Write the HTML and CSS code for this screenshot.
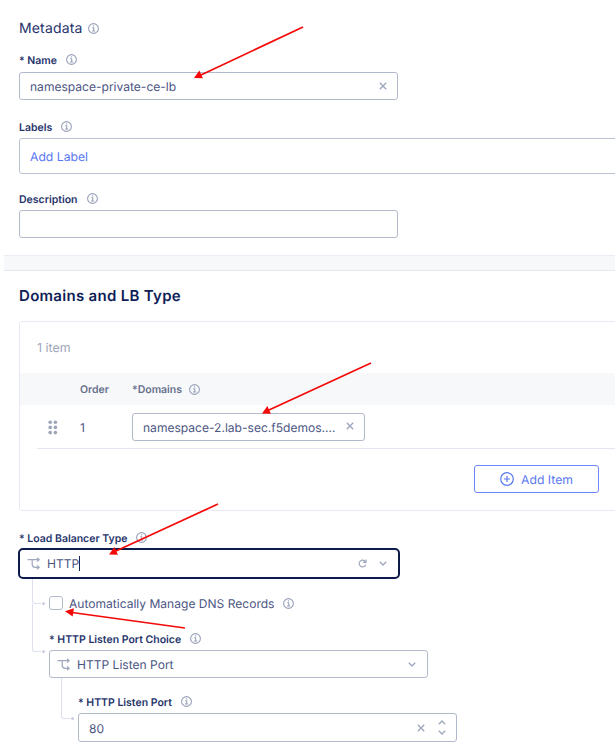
FILE: index.html
```html
<!DOCTYPE html>
<html lang="en">
<head>
<meta charset="utf-8">
<title>HTTP Load Balancer</title>
<link rel="stylesheet" href="styles.css">
</head>
<body>
<svg class="defs" width="0" height="0" aria-hidden="true">
  <symbol id="info" viewBox="0 0 11 11"><circle cx="5.5" cy="5.5" r="4.9"/><path d="M4.2 4.8h1.5v3M4 8h3.2"/><path d="M4.9 2.9h1.2"/></symbol>
  <symbol id="close" viewBox="0 0 8 8"><path d="M.8.8l6.4 6.4M7.2.8L.8 7.2"/></symbol>
  <symbol id="down" viewBox="0 0 8 5"><path d="M.8.8l3.2 3.2L7.2.8"/></symbol>
  <symbol id="up" viewBox="0 0 8 5"><path d="M.8 4.2L4 1l3.2 3.2"/></symbol>
  <symbol id="branch" viewBox="0 0 14 13"><path d="M.5 2.7h11.3M5.2 2.7v4.6q0 3 3 3h3.6M10 .8l2.2 1.9L10 4.6M10 8.4l2.2 1.9-2.2 1.9"/></symbol>
</svg>
<main class="page">
  <section class="metadata">
    <h2 class="title title-light">Metadata <svg class="info"><use href="#info"/></svg></h2>
    <label class="label label-name"><span>* Name</span> <svg class="info"><use href="#info"/></svg></label>
    <div class="field"><span class="value">namespace-private-ce-lb</span><svg class="close"><use href="#close"/></svg></div>
    <label class="label label-labels">Labels <svg class="info"><use href="#info"/></svg></label>
    <div class="tags"><a class="link">Add Label</a></div>
    <label class="label label-desc">Description <svg class="info"><use href="#info"/></svg></label>
    <div class="field"></div>
  </section>
  <div class="divider"></div>
  <section class="domains">
    <h2 class="title title-strong">Domains and LB Type</h2>
    <div class="card">
      <div class="count">1 item</div>
      <div class="grid head"><span></span><span>Order</span><span class="domain-head">*Domains <svg class="info"><use href="#info"/></svg></span></div>
      <div class="grid row">
        <svg class="grip" viewBox="0 0 10 15"><circle cx="2.2" cy="2.2" r="1.8"/><circle cx="7.4" cy="2.2" r="1.8"/><circle cx="2.2" cy="7.4" r="1.8"/><circle cx="7.4" cy="7.4" r="1.8"/><circle cx="2.2" cy="12.6" r="1.8"/><circle cx="7.4" cy="12.6" r="1.8"/></svg>
        <span class="order">1</span>
        <div class="field field-domain"><span class="value">namespace-2.lab-sec.f5demos....</span><svg class="close"><use href="#close"/></svg></div>
      </div>
      <button class="add"><svg class="plus" viewBox="0 0 14 14"><circle cx="7" cy="7" r="6.3"/><path d="M7 4v6M4 7h6"/></svg><span>Add Item</span></button>
    </div>
    <label class="label"><span>* Load Balancer Type</span> <svg class="info"><use href="#info"/></svg></label>
    <div class="field field-focus">
      <svg class="branch"><use href="#branch"/></svg><span class="value">HTTP</span><span class="caret"></span>
      <svg class="reload" viewBox="0 0 9 9"><path d="M7.4 2.6A3.4 3.4 0 1 0 7.7 5.8M8 .6v2.7H5.2"/></svg><svg class="down"><use href="#down"/></svg>
    </div>
    <div class="level">
      <div class="wire wire-a"></div>
      <div class="wire wire-b"></div>
      <div class="check"><span class="box"></span><span>Automatically Manage DNS Records</span><svg class="info"><use href="#info"/></svg></div>
      <label class="label label-choice"><span>* HTTP Listen Port Choice</span> <svg class="info"><use href="#info"/></svg></label>
      <div class="field field-choice"><svg class="branch"><use href="#branch"/></svg><span class="value">HTTP Listen Port</span><svg class="down end"><use href="#down"/></svg></div>
      <div class="level level-two">
        <div class="wire wire-c"></div>
        <label class="label"><span>* HTTP Listen Port</span> <svg class="info"><use href="#info"/></svg></label>
        <div class="field field-port"><span class="value">80</span><svg class="close"><use href="#close"/></svg><span class="stepper"><svg class="down"><use href="#up"/></svg><svg class="down"><use href="#down"/></svg></span></div>
      </div>
    </div>
  </section>
  <svg class="arrows" viewBox="0 0 615 752">
    <path d="M303 27L201 75M371 363L269 410M218 504L116 551M185 628L72 612.5"/>
    <path class="tip" d="M194 78l5.4-7.4 3.5 7.6zM262 413.5l5.4-7.4 3.5 7.6zM109 554.5l5.4-7.4 3.5 7.6zM65 611.2l8.9-3-1.2 8.2z"/>
  </svg>
</main>
</body>
</html>
```
FILE: styles.css
```css
* { box-sizing: border-box; }
body { margin: 0; background: #fff; overflow: hidden; font-family: Inter, "Liberation Sans", sans-serif; color: #4b5583; font-size: 12.05px; text-rendering: geometricPrecision; }
svg { display: block; flex: none; fill: none; stroke: #a0a8bf; stroke-width: 1.2; }
.defs { position: absolute; }
.page { position: relative; width: 615px; height: 752px; overflow: hidden; }
.metadata { height: 255px; padding: 18px 0 0 19px; }
.domains { padding: 14px 0 0 19px; }
.title { display: flex; align-items: center; gap: 6px; margin: 0; height: 20px; color: #27336b; font-size: 14px; white-space: nowrap; }
.title-light { font-weight: 400; letter-spacing: .15px; margin-bottom: 11px; }
.title-strong { font-weight: 600; font-size: 15px; letter-spacing: .3px; color: #0f1e57; }
.label { display: flex; align-items: center; gap: 9px; height: 22px; font-size: 10.5px; font-weight: 600; color: #27356c; white-space: nowrap; }
.label-name { height: 23px; padding-bottom: 1px; }
.info { width: 11px; height: 11px; stroke: #99a2b9; stroke-width: 1.1; }
.label .info { margin-top: -1px; }
.field { display: flex; align-items: center; width: 379px; height: 28px; padding: 0 10px; border: 1px solid #b1b9ca; border-radius: 3px; white-space: nowrap; background: #fff; }
.close { width: 8px; height: 8px; margin: 0 0 0 auto; stroke-width: 1.4; }
.value { padding-top: 1px; }
.label-labels { margin-top: 16px; }
.tags { display: flex; align-items: center; height: 36px; margin-right: -5px; padding-left: 10px; border: 1px solid #b9c0d0; border-radius: 3px; }
.link { color: #5978f2; font-size: 12.2px; }
.label-desc { margin-top: 14px; }
.divider { height: 16px; margin-left: 4px; background: #f6f8fa; border-top: 1px solid #eaedf3; border-bottom: 1px solid #e5e7f1; }
.card { height: 190px; margin: 16px -5px 16px 0; border: 1px solid #e8e9f4; border-radius: 3px; }
.count { height: 51px; padding: 18px 0 0 17px; line-height: 16px; font-size: 12.4px; color: #a0a7ba; }
.grid { display: grid; grid-template-columns: 43px 52px 1fr; align-items: center; margin-left: 17px; }
.head { height: 32px; margin-left: 0; padding-left: 17px; background: #f6f8fa; color: #68718d; font-size: 10.5px; font-weight: 600; }
.domain-head { display: flex; align-items: center; gap: 7px; }
.row { height: 44px; border-bottom: 1px solid #e5e7f0; }
.grip { width: 10px; height: 15px; margin: 1px 0 0 11px; fill: #9ba4b7; stroke: none; }
.order { padding-top: 1px; }
.field-domain { width: 233px; }
.field-domain .close { margin-top: -1px; }
.add { display: flex; align-items: center; justify-content: center; gap: 7px; width: 125px; height: 28px; margin: 16px 0 0 454px; padding: 0; background: #fff; border: 1px solid #6c89f7; border-radius: 3px; color: #5978f2; font: 12.2px Inter, "Liberation Sans", sans-serif; text-rendering: geometricPrecision; }
.plus { width: 14px; height: 14px; stroke: #5978f2; }
.field-focus { width: 382px; height: 31px; margin: -1px 0 0 -1px; padding: 0 11px 0 7px; border: 2px solid #0e1a4a; border-radius: 5px; }
.branch { width: 14px; height: 13px; margin-right: 6px; }
.caret { width: 1px; height: 15px; background: #17245d; }
.reload { width: 9px; height: 9px; margin: 0 12px 0 auto; }
.down { width: 8px; height: 5px; stroke-width: 1.4; }
.level { position: relative; margin-left: 30px; padding-top: 15px; }
.check { display: flex; align-items: center; height: 18px; white-space: nowrap; }
.box { width: 14px; height: 14px; margin-right: 6px; border: 1px solid #b1b9ca; border-radius: 3px; }
.check .info { margin-left: 9px; }
.label-choice { margin-top: 16px; }
.field-choice { padding: 0 11px 0 7px; }
.field-focus .value, .field-choice .value { padding-top: 0; }
.end { margin-left: auto; }
.level-two { margin-left: 29px; padding-top: 13px; }
.field-port { height: 29px; }
.stepper { display: flex; flex-direction: column; gap: 5px; margin-left: 13px; }
.wire { position: absolute; width: 9px; border: solid #dde1ef; border-width: 0 0 1px 1px; border-radius: 0 0 0 3px; }
.wire::after { content: ""; position: absolute; right: -4px; bottom: -2px; width: 3px; height: 3px; border-radius: 50%; background: #c8cde0; }
.wire-a { left: -17px; top: 0; height: 25px; }
.wire-b { left: -17px; top: 25px; height: 48px; }
.wire-c { left: -17px; top: 0; height: 41px; }
.arrows { position: absolute; inset: 0; width: 615px; height: 752px; stroke: #f50808; stroke-width: 1.7; pointer-events: none; }
.tip { fill: #f50808; stroke: none; }
```
